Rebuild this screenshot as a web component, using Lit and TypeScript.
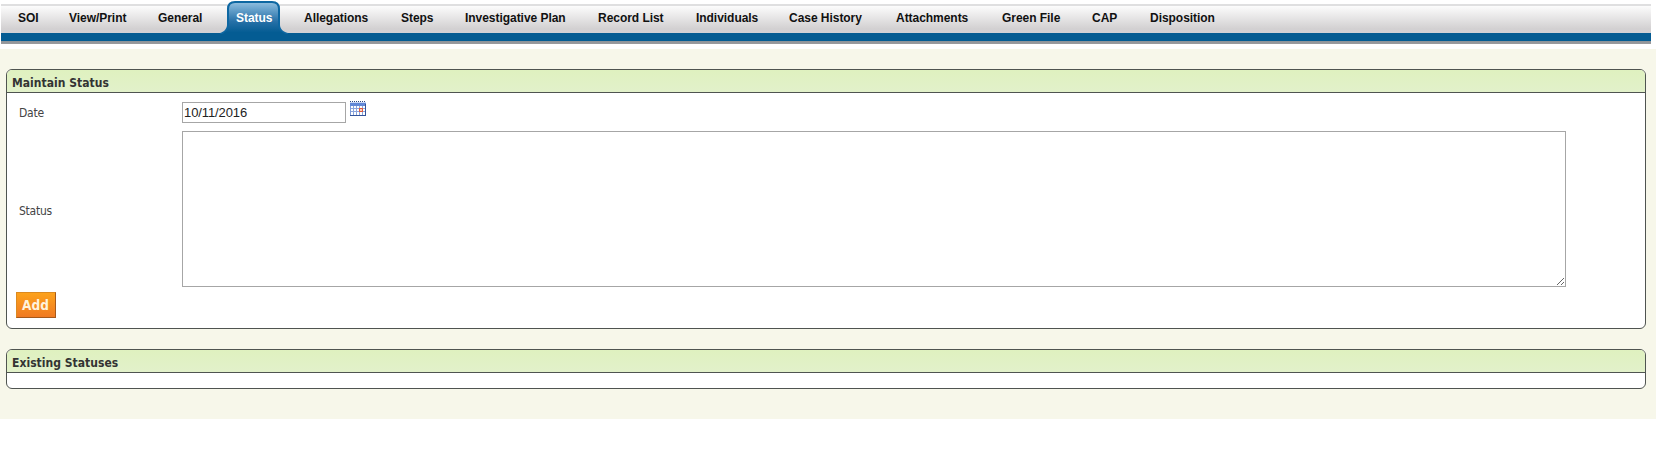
import { LitElement, html, css, svg } from "lit";
import { customElement, state } from "lit/decorators.js";

@customElement("nav-tabs")
class NavTabs extends LitElement {
  static styles = css`
    :host { display: block; height: 49px; background: #fff; }
    .bar {
      box-sizing: border-box; margin: 0 7px 0 1px; height: 44px;
      padding-left: 1px; display: flex;
      background:
        linear-gradient(#dfdfe0, #dfdfe0) 0 4px / 100% 2px no-repeat,
        linear-gradient(#fcfcfc, #d2d0d1 85%, #d0d2d6) 0 6px / 100% 27px no-repeat,
        linear-gradient(#045c93, #045c93) 0 33px / 100% 8px no-repeat,
        linear-gradient(#8d9499, #9b9b9e) 0 41px / 100% 3px no-repeat;
    }
    .tab {
      box-sizing: border-box; flex: none;
      position: relative; padding-left: 16px; height: 33px; white-space: nowrap;
      font: bold 12px/37px "Liberation Sans", Arial, sans-serif; letter-spacing: -0.04px; color: #111; cursor: pointer;
    }
    .tab.active { color: #fff; }
    .shape { position: absolute; left: 0; top: 1px; }
    .label { position: relative; }
  `;
  @state() active = "Status";
  tabs: [string, number][] = [["SOI", 51], ["View/Print", 89], ["General", 78], ["Status", 68],
    ["Allegations", 97], ["Steps", 64], ["Investigative Plan", 133], ["Record List", 98],
    ["Individuals", 93], ["Case History", 107], ["Attachments", 106], ["Green File", 90],
    ["CAP", 58], ["Disposition", 96]];

  shape() {
    return html`<svg class="shape" width="68" height="33" viewBox="0 0 68 33">
      ${svg`<defs>
        <linearGradient id="g" x1="0" y1="0" x2="0" y2="1">
          <stop offset="0" stop-color="#8dbbdc"/><stop offset=".18" stop-color="#6ca5ce"/>
          <stop offset=".6" stop-color="#2670a7"/><stop offset=".95" stop-color="#045c93"/>
        </linearGradient></defs>
        <path d="M0 33V32C4 31 7 27.500 7 24V8Q7 0 15 0H52Q60 0 60 8V24C60 27.500 63 31 68 32V33Z" fill="#0d67a2"/>
        <path d="M2 33C6 31 9 28 9 24V8Q9 2 15 2H52Q58 2 58 8V24C58 28 61 31 66 33Z" fill="url(#g)"/>`}
    </svg>`;
  }
  render() {
    return html`<nav class="bar">${this.tabs.map(([t, w]) => html`
      <a class="tab ${t === this.active ? "active" : ""}" style="width:${w}px" @click=${() => (this.active = t)}>${t === this.active ? this.shape() : ""}<span class="label">${t}</span></a>`)}</nav>`;
  }
}

@customElement("group-panel")
class GroupPanel extends LitElement {
  static properties = { heading: {} };
  declare heading: string;
  static styles = css`
    :host { display: block; border: 1px solid #4f5450; border-radius: 6px; background: #fff; overflow: hidden; }
    .head {
      box-sizing: border-box; height: 23px; padding-left: 5px; border-bottom: 1px solid #4f5450;
      background: linear-gradient(#dff1bf, #e2f1ca);
      font: bold 12px/26px "DejaVu Sans Condensed", "DejaVu Sans", sans-serif; font-stretch: condensed;
      color: #333; letter-spacing: 0.03px;
    }
  `;
  render() {
    return html`<div class="head">${this.heading}</div><slot></slot>`;
  }
}

@customElement("app-root")
export class AppRoot extends LitElement {
  static styles = css`
    :host { display: block; height: 460px; background: #fff; overflow: hidden; }
    .page { box-sizing: border-box; width: 1656px; height: 370px; padding: 20px 10px 0 6px; background: #f7f7ea; }
    .form { box-sizing: border-box; height: 235px; padding: 9px 0 0 9px; }
    .row { display: grid; grid-template-columns: 166px auto; }
    .label { padding: 1px 0 0 3px; font: 12px/20px "DejaVu Sans Condensed", "DejaVu Sans", sans-serif; font-stretch: condensed; color: #444; letter-spacing: -0.25px; }
    .status { margin-top: 8px; align-items: center; }
    .status .label { padding-top: 4px; }
    .field { display: flex; }
    input, textarea { box-sizing: border-box; border: 1px solid #a6a6a6; border-radius: 0; margin: 0; background: #fff; outline: 0; }
    input { width: 164px; height: 21px; padding: 0 1px; font: 13px "Liberation Sans", Arial, sans-serif; letter-spacing: -0.1px; color: #222; }
    textarea { display: block; width: 1384px; height: 156px; }
    .cal { margin: -1px 0 0 4px; }
    .add {
      display: block; box-sizing: border-box; width: 40px; height: 26px; margin-top: 5px; padding: 0 1px 1px 0;
      border: 1px solid; border-color: #dc8a20 #a5591b #a5591b #dc8a20; border-radius: 0;
      background: linear-gradient(#fca21c, #f07a22); color: #fff3dc;
      font: bold 13.5px "DejaVu Sans Condensed", "DejaVu Sans", sans-serif;
    }
    .existing { margin-top: 20px; }
    .empty { height: 15px; }
  `;
  render() {
    return html`
      <nav-tabs></nav-tabs>
      <main class="page">
        <group-panel heading="Maintain Status">
          <div class="form">
            <div class="row">
              <label class="label">Date</label>
              <div class="field">
                <input type="text" value="10/11/2016" />
                <svg class="cal" width="16" height="16" viewBox="0 0 16 16" shape-rendering="crispEdges">
                  <path d="M0 .5H16" stroke="#2b4680" stroke-dasharray="1 1"/>
                  <rect y="1" width="16" height="14" fill="#7d9bd8"/>
                  <path d="M0 1.500H16" stroke="#c9d8f5"/>
                  <rect y="2" width="16" height="3" fill="#6288d6"/>
                  <path d="M1 5h14v9H1z" fill="#fff"/>
                  <path d="M3.500 5v9M6.500 5v9M9.500 5v9M12.500 5v9M1 7.500h14M1 10.500h14" stroke="#8ba5dc"/>
                  <path d="M0 14.500H16M15.500 3V15" stroke="#34549a"/>
                  <path d="M9.500 7.500h3v3h-3z" fill="#fbd2bf" stroke="#e0593b"/>
                </svg>
              </div>
            </div>
            <div class="row status">
              <label class="label">Status</label>
              <textarea></textarea>
            </div>
            <button class="add">Add</button>
          </div>
        </group-panel>
        <group-panel class="existing" heading="Existing Statuses"><div class="empty"></div></group-panel>
      </main>`;
  }
}
